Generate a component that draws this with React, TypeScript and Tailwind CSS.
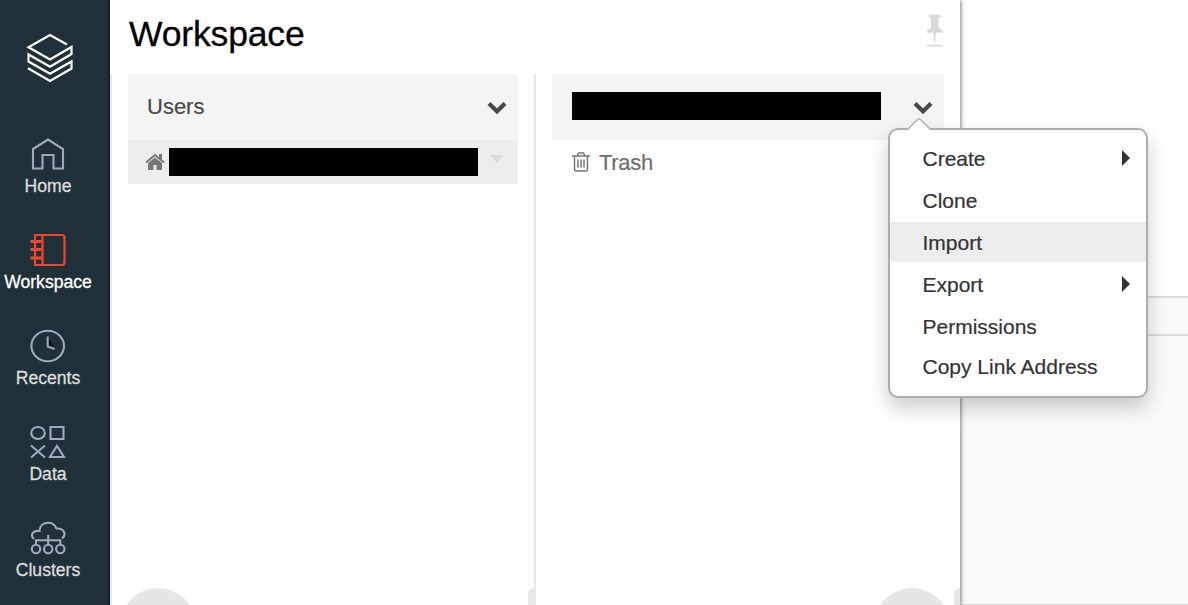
import type { ReactNode } from 'react';

function Logo() {
  return (
    <svg width="50" height="52" viewBox="0 0 50 52" fill="none" stroke="#fff" strokeWidth="2.200">
      <path d="M42 12.500 25 3 3.500 15.300 25 27.500 46.500 15V22L25 34.700 3.500 22.500V29.500L25 41.700 46.500 29.500V36.500L25 49 3 36.200" />
    </svg>
  );
}

function HomeIcon() {
  return (
    <svg width="36" height="36" viewBox="0 0 36 36" fill="none" stroke="#9fabbc" strokeWidth="2.100">
      <path d="M3 13 18 3.500 33 13V32.500H23.500V19H12.500V32.500H3Z" />
    </svg>
  );
}

function NotebookIcon() {
  return (
    <svg width="36" height="36" viewBox="0 0 36 36" fill="none" stroke="#f2452f" strokeWidth="2.200">
      <path d="M5 3H32a2.500 2.500 0 0 1 2.500 2.500V30.500a2.500 2.500 0 0 1-2.500 2.500H5ZM12.500 3V33" />
      <path strokeWidth="2.800" d="M.5 9.500H12.500M.5 17.500H12.500M.5 26H12.500" />
    </svg>
  );
}

function ClockIcon() {
  return (
    <svg width="36" height="36" viewBox="0 0 36 36" fill="none" stroke="#9fabbc" strokeWidth="2.100">
      <ellipse cx="17.700" cy="18" rx="16.300" ry="15.200" />
      <path d="M18 9 24.500 19.500 18 18Z" fill="#080c10" stroke="none" />
      <path d="M17.700 8.500V18.500L24.500 21" />
    </svg>
  );
}

function DataIcon() {
  return (
    <svg width="36" height="36" viewBox="0 0 36 36" fill="none" stroke="#9fabbc" strokeWidth="2.100">
      <ellipse cx="8" cy="9" rx="6.800" ry="6" />
      <path d="M20.500 3H33.500V15H20.500ZM1 21.500 15 33.500M15 21.500 1 33.500M27 22 34 33H20Z" />
    </svg>
  );
}

function ClusterIcon() {
  return (
    <svg width="36" height="36" viewBox="0 0 36 36" fill="none" stroke="#9fabbc" strokeWidth="2.100">
      <path d="M4 19C0 15.500 2.500 10 9.500 11 10 .5 24.500.5 26.500 8.500 34 8 37 14.500 32 18.500" />
      <path d="M18.200 15V25M6 25V20.200H30.300V25" />
      <circle cx="6" cy="29" r="4.200" />
      <circle cx="18.200" cy="29" r="4.200" />
      <circle cx="30.300" cy="29" r="4.200" />
    </svg>
  );
}

function NavItem({ icon, label, active }: { icon: ReactNode; label: string; active?: boolean }) {
  return (
    <a className="flex h-24 w-24 shrink-0 flex-col items-center">
      {icon}
      <span
        className={`mt-0.5 text-[17.6px] leading-6 [-webkit-text-stroke:0.3px] ${active ? 'text-white' : 'text-[#dcdddd]'}`}
      >
        {label}
      </span>
    </a>
  );
}

function Chevron() {
  return (
    <svg className="mt-0.5 shrink-0" width="20" height="14" viewBox="0 0 20 14" fill="none" stroke="#484848" strokeWidth="4.200">
      <path d="M2 2.500 10 10.300 18 2.500" />
    </svg>
  );
}

function MenuItem({ label, submenu, active }: { label: string; submenu?: boolean; active?: boolean }) {
  return (
    <li className={`flex h-10 items-center justify-between pl-[32.5px] pr-4 pt-0.5 ${active ? 'bg-[#ededed]' : ''}`}>
      <span>{label}</span>
      {submenu && (
        <svg className="mb-0.5" width="8" height="16" viewBox="0 0 8 16" fill="#333">
          <path d="M0 0 8 8 0 16Z" />
        </svg>
      )}
    </li>
  );
}

function Redacted() {
  return <div className="h-7 w-[309px] shrink-0 bg-black" />;
}

export default function App() {
  return (
    <div className="relative flex h-[605px] w-[1188px] overflow-hidden bg-white font-['Liberation_Sans',Arial,sans-serif]">
      <nav className="flex w-[110px] shrink-0 flex-col overflow-hidden border-r-2 border-[#17242b] bg-[#203038]">
        <div className="flex h-[136px] shrink-0 pl-[25px] pt-8">
          <Logo />
        </div>
        <NavItem icon={<HomeIcon />} label="Home" />
        <NavItem icon={<NotebookIcon />} label="Workspace" active />
        <NavItem icon={<ClockIcon />} label="Recents" />
        <NavItem icon={<DataIcon />} label="Data" />
        <NavItem icon={<ClusterIcon />} label="Clusters" />
      </nav>

      <section className="relative z-10 flex w-[850px] shrink-0 flex-col bg-white shadow-[1px_0_4px_rgba(0,0,0,0.5)]">
        <header className="flex h-[74px] shrink-0 items-start justify-between pl-[19px] pr-4">
          <h1 className="pt-[13px] text-[35.5px] leading-[42px] tracking-[-0.15px] text-black [-webkit-text-stroke:0.3px]">
            Workspace
          </h1>
          <svg className="mt-[14px]" width="18" height="34" viewBox="0 0 18 34" fill="#d8d8d8">
            <path d="M3 .8H14.500V3L12.500 4.200V13.500L16.500 16.500V18.700H9.800L9.200 29H8.200L7.600 18.700H1V16.500L5 13.500V4.200L3 3Z" />
            <path d="M1 30.800H16.500V32.500H1Z" />
          </svg>
        </header>
        <div className="flex min-h-0 flex-1">
          <div className="relative flex w-[426px] shrink-0 flex-col overflow-hidden border-x-2 border-[#e6e7e8] pl-4 pr-4">
            <div className="flex h-[66px] shrink-0 items-center justify-between bg-[#f4f4f4] pl-[19px] pr-[11px] text-[22px] text-[#4a4a4a] [-webkit-text-stroke:0.2px]">
              <span className="mb-0.5">Users</span>
              <Chevron />
            </div>
            <div className="flex h-11 shrink-0 items-center bg-[#ededed] pl-[17px]">
              <svg className="mr-1 shrink-0" width="20" height="18" viewBox="0 0 20 18" fill="#777">
                <path d="M10 4.500 17 10V17H11.500V12H8.500V17H3V10Z" />
                <path d="M1 9.500 10 2 19 9.500" fill="none" stroke="#777" strokeWidth="2" />
                <path d="M14 1H17V7L14 5Z" />
              </svg>
              <Redacted />
              <svg className="mb-1.5 ml-3" width="14" height="8" viewBox="0 0 14 8" fill="#dcdcdc">
                <path d="M0 0H14L7 8Z" />
              </svg>
            </div>
            <div className="absolute left-2 top-[514px] size-[76px] rounded-full bg-[#e6e6e6]" />
            <div className="absolute right-0 top-[514px] h-10 w-1.5 rounded-tl-md bg-[#e6e7e8]" />
          </div>
          <div className="relative flex flex-1 flex-col overflow-hidden pl-4 pr-4">
            <div className="flex h-[66px] shrink-0 items-center justify-between bg-[#f4f4f4] pl-5 pr-[11px]">
              <div className="mb-0.5">
                <Redacted />
              </div>
              <Chevron />
            </div>
            <div className="flex h-11 items-center gap-[9px] pl-5 text-[22px] text-[#6f6f6f] [-webkit-text-stroke:0.2px]">
              <svg width="18" height="20" viewBox="0 0 18 20" fill="none" stroke="#777" strokeWidth="1.500">
                <path d="M0 4H18M5 4 6.500 1H11.500L13 4M2.500 4V17Q2.500 19 4.500 19H13.500Q15.500 19 15.500 17V4M6 7.500V15.500M9 7.500V15.500M12 7.500V15.500" />
              </svg>
              <span className="tracking-[-0.3px]">Trash</span>
            </div>
            <div className="absolute left-[338px] top-[514px] size-[76px] rounded-full bg-[#e6e6e6]" />
            <div className="absolute right-0 top-[514px] h-10 w-1.5 rounded-tl-md bg-[#e6e7e8]" />
          </div>
        </div>
      </section>

      <main className="flex flex-1 flex-col">
        <div className="h-[296px]" />
        <div className="h-10 border-y-2 border-[#dcdcdc] bg-[#fafafa]" />
        <div className="h-[269px] border-b border-[#d5d5d5] bg-[#fafafa]" />
      </main>

      <div className="absolute left-[888px] top-[128px] z-20 h-[270px] w-[260px] rounded-[10px] border-2 border-[#adadad] bg-white pt-2 text-[21px] leading-6 text-[#333] shadow-[0_10px_20px_rgba(0,0,0,0.2)] [-webkit-text-stroke:0.2px]">
        <svg className="absolute left-4 -top-3" width="26" height="13" viewBox="0 0 26 13">
          <path d="M1 13 13 1 25 13Z" fill="#fff" />
          <path d="M1 12 11.500 1.500Q13 0 14.500 1.500L25 12" fill="none" stroke="#b5b5b5" strokeWidth="1.500" />
        </svg>
        <ul className="flex flex-col">
          <MenuItem label="Create" submenu />
          <li className="h-0.5" />
          <MenuItem label="Clone" />
          <li className="h-0.5" />
          <MenuItem label="Import" active />
          <li className="h-0.5" />
          <MenuItem label="Export" submenu />
          <li className="h-0.5" />
          <MenuItem label="Permissions" />
          <MenuItem label="Copy Link Address" />
        </ul>
      </div>
    </div>
  );
}
